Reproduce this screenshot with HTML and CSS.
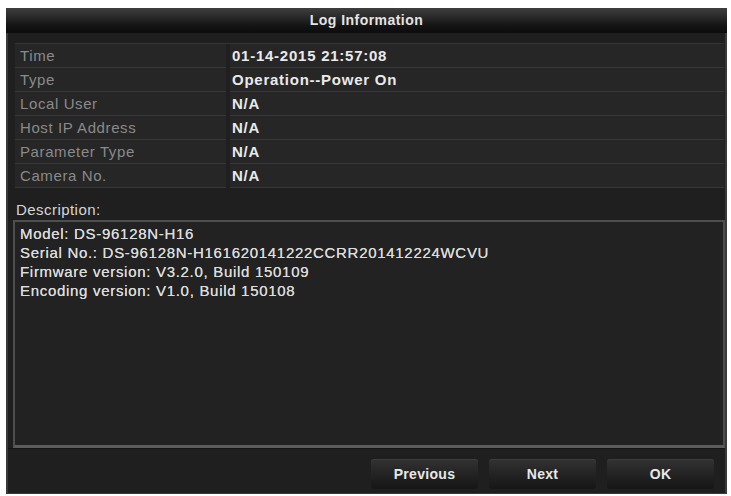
FILE: index.html
```html
<!DOCTYPE html>
<html>
<head>
<meta charset="utf-8">
<link rel="stylesheet" href="styles.css">
</head>
<body>
<div class="window">
  <div class="titlebar">Log Information</div>
  <div class="main">
    <div class="table">
      <div class="row"><div class="cell label">Time</div><div class="cell value">01-14-2015 21:57:08</div></div>
      <div class="row"><div class="cell label">Type</div><div class="cell value">Operation--Power On</div></div>
      <div class="row"><div class="cell label">Local User</div><div class="cell value">N/A</div></div>
      <div class="row"><div class="cell label">Host IP Address</div><div class="cell value">N/A</div></div>
      <div class="row"><div class="cell label">Parameter Type</div><div class="cell value">N/A</div></div>
      <div class="row"><div class="cell label">Camera No.</div><div class="cell value">N/A</div></div>
    </div>
    <div class="desc-label">Description:</div>
    <div class="desc-box">
      <div class="line">Model: DS-96128N-H16</div>
      <div class="line">Serial No.: DS-96128N-H161620141222CCRR201412224WCVU</div>
      <div class="line">Firmware version: V3.2.0, Build 150109</div>
      <div class="line">Encoding version: V1.0, Build 150108</div>
    </div>
  </div>
  <div class="footer">
    <button class="btn">Previous</button>
    <button class="btn">Next</button>
    <button class="btn">OK</button>
  </div>
</div>
</body>
</html>
```
FILE: styles.css
```css
html, body {
  margin: 0;
  padding: 0;
  background: #ffffff;
}
body {
  font-family: "Liberation Sans", Arial, sans-serif;
}
.window {
  margin: 8px 0 0 6px;
  width: 721px;
  height: 486px;
  box-sizing: border-box;
  background: #1f1f1f;
  border-left: 2px solid #3a3a3a;
  border-right: 2px solid #3a3a3a;
  border-bottom: 1px solid #3a3a3a;
  display: flex;
  flex-direction: column;
}
.titlebar {
  height: 25px;
  line-height: 25px;
  text-align: center;
  color: #e4e4e4;
  font-weight: bold;
  font-size: 14px;
  letter-spacing: 0.45px;
  background: linear-gradient(#3e3e3e 0%, #2a2a2a 35%, #141414 70%, #0c0c0c 100%);
  margin: 0 -2px;
}
.main {
  padding: 10px 1px 0 7px;
  display: flex;
  flex-direction: column;
}
.table {
  display: flex;
  flex-direction: column;
  border-top: 1px solid #343434;
}
.row {
  display: flex;
  gap: 4px;
}
.cell {
  height: 23px;
  line-height: 23px;
  background: #262626;
  border-bottom: 1px solid #373737;
  font-size: 15px;
  padding-left: 5px;
  box-sizing: content-box;
}
.label {
  width: 206px;
  color: #8a8a8a;
  letter-spacing: 0.6px;
}
.value {
  flex: 1;
  color: #eaeaea;
  font-weight: bold;
  padding-left: 2px;
  letter-spacing: 0.75px;
}
.desc-label {
  margin-top: 13px;
  height: 19px;
  line-height: 18px;
  font-size: 15px;
  letter-spacing: 0.45px;
  color: #d6d6d6;
  padding-left: 1px;
}
.desc-box {
  margin-left: -2px;
  margin-right: -1px;
  height: 228px;
  box-sizing: border-box;
  border: 2px solid #4e4e4e;
  border-bottom: 3px solid #5c5c5c;
  background: #222222;
  padding: 2px 5px;
}
.line {
  height: 19px;
  line-height: 19px;
  font-size: 15px;
  letter-spacing: 0.7px;
  color: #dcdcdc;
  text-shadow: 0 0 0.6px #dcdcdc;
}
.footer {
  flex: 1;
  display: flex;
  justify-content: flex-end;
  align-items: flex-start;
  gap: 11px;
  padding: 10px 11px 0 0;
  border-top: 1px solid #141414;
}
.btn {
  width: 107px;
  height: 30px;
  border: none;
  border-radius: 3px;
  background: linear-gradient(#333333 0%, #262626 40%, #161616 100%);
  box-shadow: inset 0 1px 0 #3c3c3c;
  color: #e8e8e8;
  font-family: "Liberation Sans", Arial, sans-serif;
  font-weight: bold;
  font-size: 14px;
  letter-spacing: 0.3px;
  padding: 0;
}
```
